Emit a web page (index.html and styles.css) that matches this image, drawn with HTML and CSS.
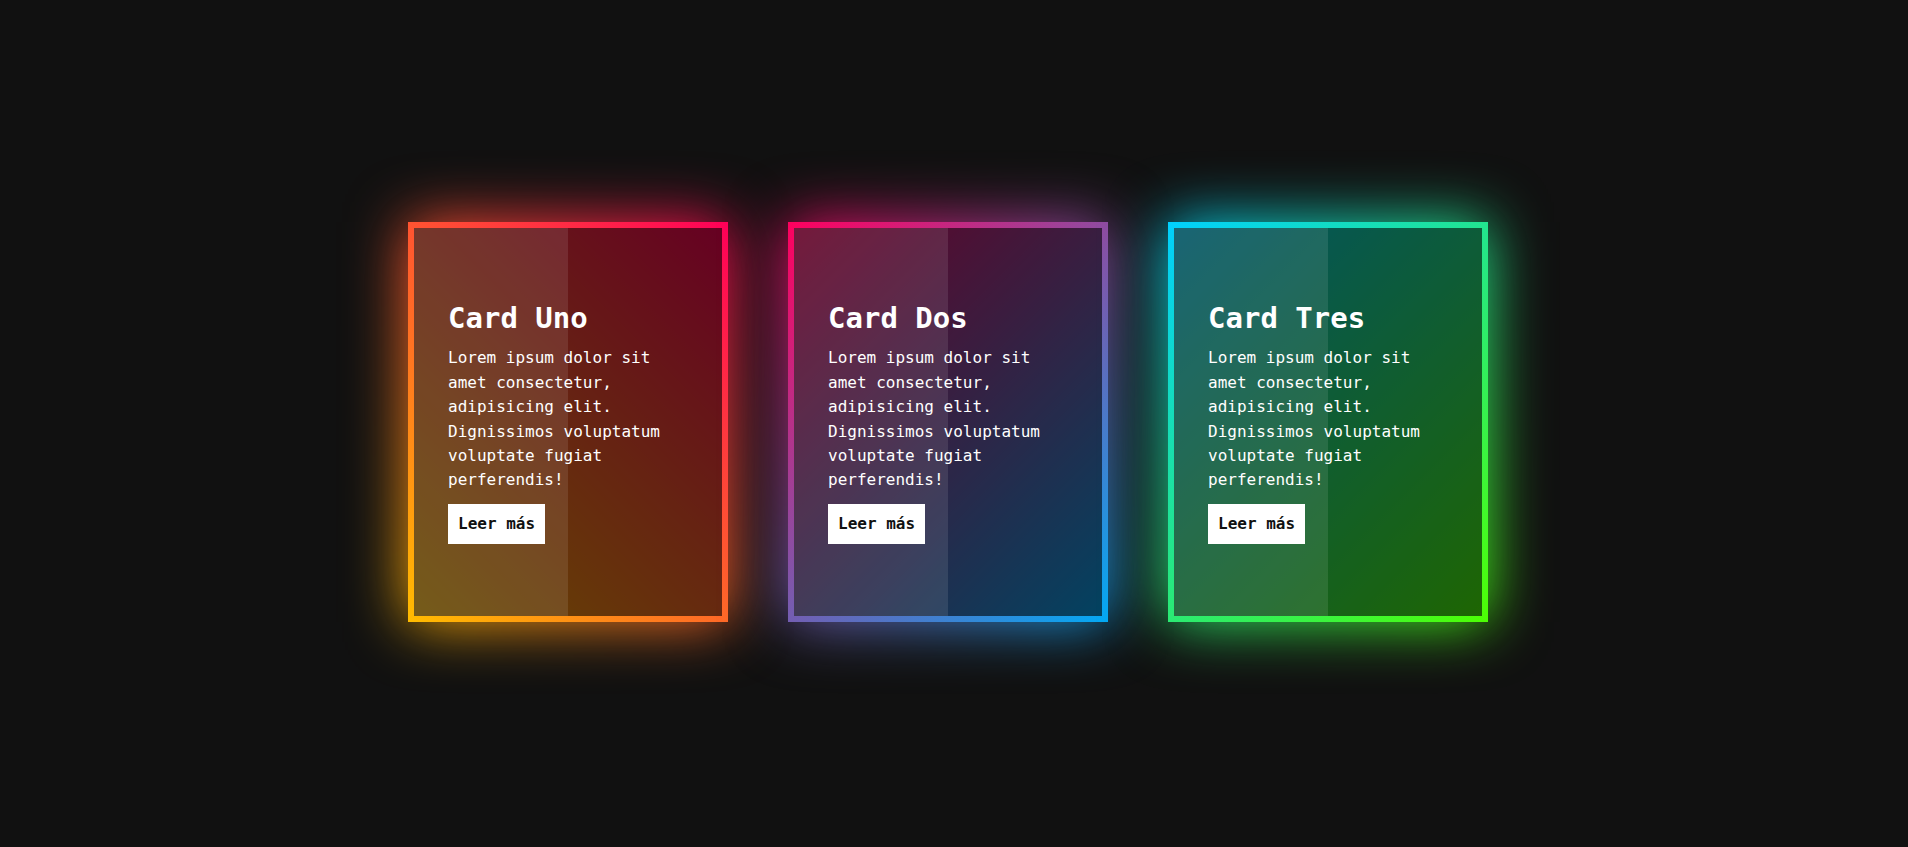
FILE: index.html
```html
<!DOCTYPE html>
<html lang="es">
<head>
<meta charset="utf-8">
<title>Cards</title>
<link rel="stylesheet" href="styles.css">
</head>
<body>
<div class="container">
  <div class="card card-uno">
    <div class="card-inner">
      <div class="content">
        <h2 class="title">Card Uno</h2>
        <p class="text">Lorem ipsum dolor sit amet consectetur, adipisicing elit. Dignissimos voluptatum voluptate fugiat perferendis!</p>
        <a class="btn" href="#">Leer más</a>
      </div>
    </div>
  </div>
  <div class="card card-dos">
    <div class="card-inner">
      <div class="content">
        <h2 class="title">Card Dos</h2>
        <p class="text">Lorem ipsum dolor sit amet consectetur, adipisicing elit. Dignissimos voluptatum voluptate fugiat perferendis!</p>
        <a class="btn" href="#">Leer más</a>
      </div>
    </div>
  </div>
  <div class="card card-tres">
    <div class="card-inner">
      <div class="content">
        <h2 class="title">Card Tres</h2>
        <p class="text">Lorem ipsum dolor sit amet consectetur, adipisicing elit. Dignissimos voluptatum voluptate fugiat perferendis!</p>
        <a class="btn" href="#">Leer más</a>
      </div>
    </div>
  </div>
</div>
</body>
</html>
```

FILE: styles.css
```css
* {
  box-sizing: border-box;
}

html, body {
  margin: 0;
  padding: 0;
  background: #111111;
  height: 100%;
  overflow: hidden;
}

body {
  font-family: "DejaVu Sans Mono", "Liberation Mono", monospace;
  color: #ffffff;
}

.container {
  display: flex;
  gap: 60px;
  padding: 222px 0 0 408px;
}

.card {
  position: relative;
  isolation: isolate;
  width: 320px;
  height: 400px;
  padding: 6px;
  display: flex;
}

.card::before,
.card::after {
  content: "";
  position: absolute;
  inset: 0;
  background: var(--grad);
}

.card::before {
  z-index: -1;
}

.card::after {
  z-index: -2;
  filter: blur(30px);
}

.card-uno {
  --grad: linear-gradient(45deg, #ffbc00, #ff0058);
}

.card-dos {
  --grad: linear-gradient(135deg, #ff005e, #03a9f4);
}

.card-tres {
  --grad: linear-gradient(135deg, #00d0ff, #4dff03);
}

.card-inner {
  position: relative;
  flex: 1;
  background: rgba(0, 0, 0, 0.6);
  display: flex;
  align-items: center;
  overflow: hidden;
}

.card-inner::before {
  content: "";
  position: absolute;
  left: 0;
  top: 0;
  width: 50%;
  height: 100%;
  background: rgba(255, 255, 255, 0.1);
  pointer-events: none;
}

.content {
  position: relative;
  width: 274px;
  padding-left: 34px;
  display: flex;
  flex-direction: column;
  align-items: flex-start;
}

.title {
  margin: 0 0 10px;
  font-size: 29px;
  line-height: 36px;
  font-weight: bold;
}

.text {
  margin: 0 0 11px;
  font-size: 16px;
  line-height: 24.4px;
}

.btn {
  display: block;
  padding: 10px;
  background: #ffffff;
  color: #111111;
  font-size: 16px;
  line-height: 20px;
  font-weight: bold;
  text-decoration: none;
}
```
